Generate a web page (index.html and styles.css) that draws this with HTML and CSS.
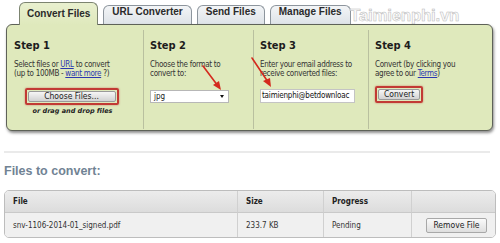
FILE: index.html
```html
<!DOCTYPE html>
<html>
<head>
    <meta charset="utf-8"/>
    <title>Convert Files</title>
    <link rel="stylesheet" href="styles.css">
</head>
<body>
<div class="page">
    <ul class="tabs">
        <li class="tab active">Convert Files</li>
        <li class="tab">URL Converter</li>
        <li class="tab">Send Files</li>
        <li class="tab">Manage Files</li>
    </ul>
    <div class="watermark">Taimienphi.vn</div>
    <div class="panel">
        <div class="step">
            <h2>Step 1</h2>
            <p>Select files or <a href="#">URL</a> to convert<br/>(up to 100MB - <a href="#">want more</a> ?)</p>
            <div class="ctrl center"><span class="mark"><span class="btn wide">Choose Files...</span></span></div>
            <div class="drag">or drag and drop files</div>
        </div>
        <div class="step">
            <h2>Step 2</h2>
            <p>Choose the format to<br/>convert to:</p>
            <div class="ctrl"><span class="select">jpg<i class="caret"></i></span></div>
        </div>
        <div class="step">
            <h2>Step 3</h2>
            <p>Enter your email address to<br/>receive converted files:</p>
            <div class="ctrl"><span class="input">taimienphi@betdownloac</span></div>
        </div>
        <div class="step">
            <h2>Step 4</h2>
            <p>Convert (by clicking you<br/>agree to our <a href="#">Terms</a>)</p>
            <div class="ctrl up"><span class="mark"><span class="btn">Convert</span></span></div>
        </div>
    </div>
    <div class="sep"></div>
    <h3 class="files_title">Files to convert:</h3>
    <table class="files">
        <tr class="head">
            <th class="c_file">File</th>
            <th class="c_size">Size</th>
            <th class="c_prog">Progress</th>
            <th class="c_act"></th>
        </tr>
        <tr>
            <td>snv-1106-2014-01_signed.pdf</td>
            <td>233.7 KB</td>
            <td>Pending</td>
            <td class="c_act"><span class="btn remove">Remove File</span></td>
        </tr>
    </table>
    <svg class="arrows" width="500" height="243" viewBox="0 0 500 243">
        <g stroke="#d42a1e" stroke-width="1.6" fill="none" stroke-linecap="round">
            <path d="M203 66 L218 86"/>
            <path d="M252 58 L268 82"/>
        </g>
        <g fill="#d42a1e">
            <path d="M221 90 L213 85 L219 81 Z"/>
            <path d="M271 87 L263 81 L270 78 Z"/>
        </g>
    </svg>
</div>
</body>
</html>
```

FILE: styles.css
```css
*{ padding:0; margin:0; }
body{ background:#fff; font-family:"DejaVu Sans Condensed","DejaVu Sans",sans-serif; color:#222; }
.page{ position:relative; width:500px; height:243px; overflow:hidden; }

.tabs{ list-style:none; display:flex; align-items:flex-end; gap:5px; height:22px; padding:3px 0 0 19px; }
.tab{ height:19px; line-height:19px; padding:0 8px; font:bold 10px "Liberation Sans",Arial,sans-serif; color:#2a2a2a; border:1px solid #8d959d; border-bottom:none; border-top-left-radius:6px; border-top-right-radius:6px; background:linear-gradient(#f3f5f7,#dde2e7); }
.tab.active{ position:relative; z-index:2; height:22px; line-height:22px; padding:0 7px; border-color:#7c8470; background:linear-gradient(#e9f0cf,#dfe9bc); }

.watermark{ position:absolute; left:350px; top:6px; font:bold 17px "Liberation Sans",Arial,sans-serif; color:#fbfbfb; -webkit-text-stroke:0.5px #b8b8b8; letter-spacing:-0.3px; }

.panel{ position:relative; z-index:1; margin:-1px 7px 0 6px; height:100px; border:1px solid #5e6258; border-radius:6px; background:#dfe9bc; box-shadow:1px 2px 3px rgba(0,0,0,.45); display:grid; grid-template-columns:136px 110px 115px 1fr; padding-top:5px; }
.step{ height:90px; padding:9px 6px 0 7px; }
.step + .step{ border-left:1px solid #b9c09f; padding-left:6px; }
.step h2{ font-size:11px; line-height:14px; font-weight:bold; color:#1c1c1c; }
.step p{ margin-top:7px; font-size:8px; line-height:9px; letter-spacing:-0.3px; color:#333; }
.step a{ color:#2b37b0; }
.ctrl{ margin-top:11px; height:14px; display:flex; align-items:center; }
.ctrl.center{ justify-content:center; padding-right:8px; }
.ctrl.up{ margin-top:9px; height:15px; }

.mark{ display:inline-block; padding:1px; border:2px solid #c23a34; border-radius:2px; box-shadow:0 0 2px rgba(190,40,40,.6); }
.btn{ display:block; font:8.5px "DejaVu Sans Condensed","DejaVu Sans",sans-serif; color:#222; text-align:center; border:1px solid #9a9a9a; border-radius:2px; background:linear-gradient(#f6f6f6,#d2d2d2); height:9px; line-height:9px; padding:0 5px; }
.btn.wide{ width:76px; }
.drag{ margin-top:4px; font:bold italic 6.5px "DejaVu Sans","DejaVu Sans Condensed",sans-serif; text-align:center; padding-right:6px; color:#222; }

.select{ position:relative; display:block; width:74px; height:11px; line-height:11px; padding-left:3px; background:#fff; border:1px solid #b7b7b7; font-size:8px; }
.caret{ position:absolute; right:4px; top:4px; border-left:2.5px solid transparent; border-right:2.5px solid transparent; border-top:3px solid #111; }
.input{ display:block; width:92px; height:12px; line-height:12px; padding-left:1px; background:#fff; border:1px solid #c4c4c4; font-size:8px; letter-spacing:-0.2px; white-space:nowrap; overflow:hidden; color:#111; }

.sep{ margin:20px 10px 0 4px; height:2px; background:#eaeaea; }
.files_title{ margin:11px 0 0 4px; font:bold 12.5px "Liberation Sans",Arial,sans-serif; color:#718394; }

.files{ margin:12px 0 0 4px; width:492px; border-collapse:separate; border-spacing:0; border:1px solid #bdbdbd; border-radius:5px; overflow:hidden; font-size:8px; table-layout:fixed; }
.files th, .files td{ text-align:left; padding:0 0 0 8px; border-left:1px solid #d0d0d0; }
.files th:first-child, .files td:first-child{ border-left:none; }
.files .head th{ height:21px; font-weight:bold; background:linear-gradient(#ececec,#dcdcdc); border-bottom:1px solid #c9c9c9; color:#222; }
.files td{ height:24px; background:#f0f0f0; color:#333; }
.c_file{ width:224px; }
.c_size{ width:77px; }
.c_prog{ width:79px; }
.files td.c_act{ padding:0 0 0 14px; }
.btn.remove{ display:inline-block; height:13px; line-height:13px; width:49px; padding:0 5px; border-color:#a8a8a8; background:linear-gradient(#fafafa,#dedede); }

.arrows{ position:absolute; left:0; top:0; z-index:3; pointer-events:none; }
```
